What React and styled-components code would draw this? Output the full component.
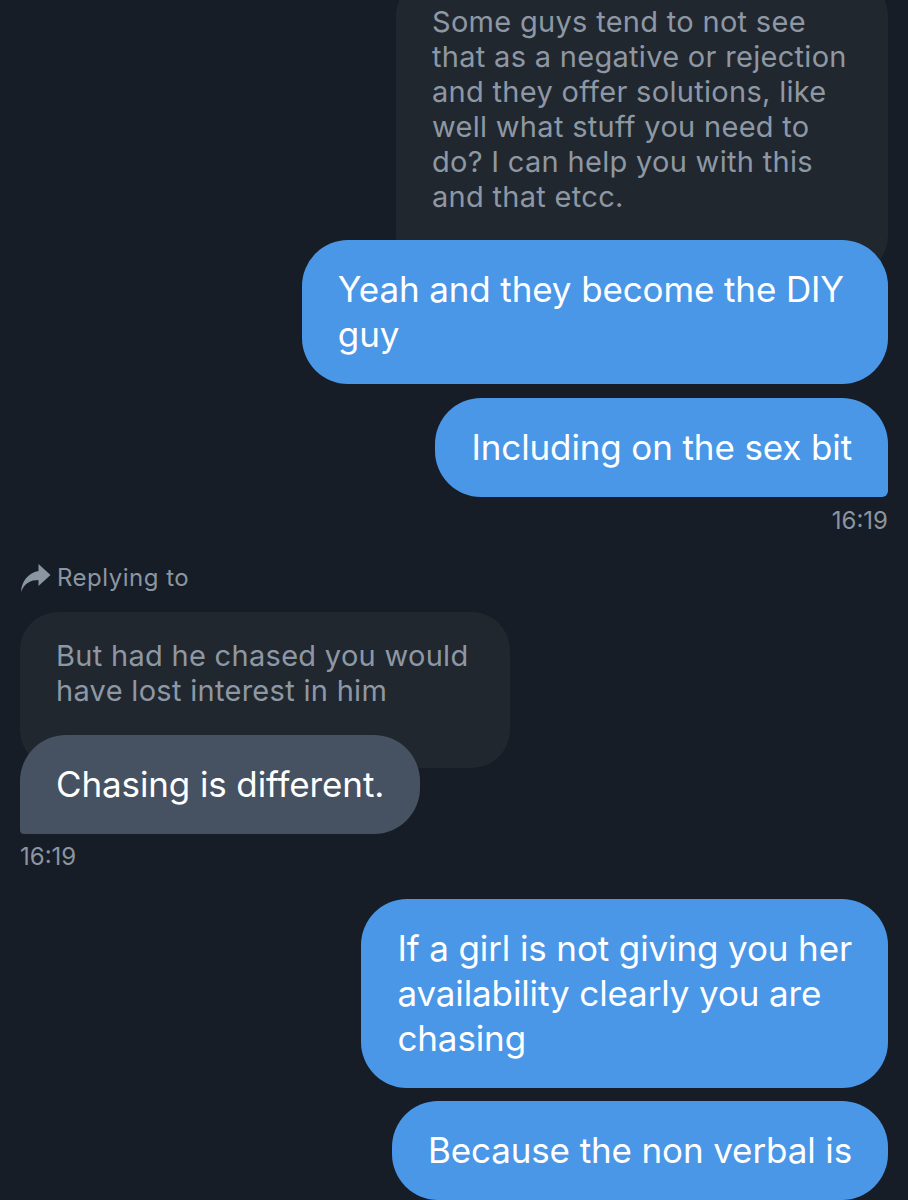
import React from 'react';
import styled, { createGlobalStyle } from 'styled-components';

const GlobalStyle = createGlobalStyle`
  html, body {
    margin: 0;
    padding: 0;
    background: #161d27;
  }
`;

const Screen = styled.div`
  width: 908px;
  height: 1200px;
  overflow: hidden;
  background: #161d27;
  font-family: Inter, "Noto Sans", sans-serif;
  -webkit-font-smoothing: antialiased;
`;

const Thread = styled.div`
  display: flex;
  flex-direction: column;
  padding: 0 20px;
  margin-top: -22px;
`;

const Row = styled.div`
  display: flex;
  flex-direction: column;
  align-items: ${p => (p.$side === 'out' ? 'flex-end' : 'flex-start')};
  margin-top: ${p => p.$gap || 0}px;
`;

const Quote = styled.div`
  width: ${p => p.$width || 492}px;
  box-sizing: border-box;
  background: #21272f;
  border-radius: 38px;
  padding: 26px 30px 60px 36px;
  color: #8e98a4;
  font-size: 29px;
  line-height: 35px;
  letter-spacing: 0.3px;
`;

const radii = {
  out: '46px 46px 46px 46px',
  outLast: '46px 46px 6px 46px',
  in: '46px 46px 46px 4px',
};

const Bubble = styled.div`
  position: relative;
  z-index: 1;
  width: max-content;
  box-sizing: border-box;
  padding: 27px ${p => p.$padRight || 36}px 27px 36px;
  border-radius: ${p => radii[p.$shape || 'out']};
  background: ${p => (p.$tone === 'gray' ? '#465261' : '#4a97e7')};
  color: #ffffff;
  font-size: 35px;
  line-height: 45px;
  letter-spacing: -0.12px;
  margin-top: ${p => (p.$overlap ? `-${p.$overlap}px` : '0')};
`;

const Time = styled.div`
  color: #8b949f;
  font-size: 24px;
  line-height: 28px;
  margin-top: ${p => p.$gap}px;
`;

const ReplyLabel = styled.div`
  display: flex;
  align-items: center;
  gap: 6px;
  margin-top: 28px;
  color: #8b96a3;
  font-size: 24px;
  line-height: 30px;
  letter-spacing: 0.5px;
`;

const ReplyIcon = () => (
  <svg width="31" height="28" viewBox="0 0 30 28">
    <path
      d="M18 0 L30 11 L18 22 L18 16 C10 16 4 19 0.5 28 C1 18 7 9 18 7 Z"
      fill="#8b96a3"
    />
  </svg>
);

const Lines = ({ lines }) =>
  lines.map((l, i) => (
    <React.Fragment key={i}>
      {i > 0 && <br />}
      {l}
    </React.Fragment>
  ));

export default function App() {
  return (
    <Screen>
      <GlobalStyle />
      <Thread>
        <Row $side="out">
          <Quote>
            <Lines
              lines={[
                'Some guys tend to not see',
                'that as a negative or rejection',
                'and they offer solutions, like',
                'well what stuff you need to',
                'do? I can help you with this',
                'and that etcc.',
              ]}
            />
          </Quote>
          <Bubble $overlap={34} $padRight={44}>
            <Lines lines={['Yeah and they become the DIY', 'guy']} />
          </Bubble>
        </Row>
        <Row $side="out" $gap={14}>
          <Bubble $shape="outLast">Including on the sex bit</Bubble>
          <Time $gap={10}>16:19</Time>
        </Row>

        <Row $side="in">
          <ReplyLabel>
            <ReplyIcon />
            Replying to
          </ReplyLabel>
        </Row>
        <Row $side="in" $gap={19}>
          <Quote $width={490}>
            <Lines lines={['But had he chased you would', 'have lost interest in him']} />
          </Quote>
          <Bubble $tone="gray" $shape="in" $overlap={33}>
            Chasing is different.
          </Bubble>
          <Time $gap={9}>16:19</Time>
        </Row>

        <Row $side="out" $gap={28}>
          <Bubble>
            <Lines
              lines={[
                'If a girl is not giving you her',
                'availability clearly you are',
                'chasing',
              ]}
            />
          </Bubble>
        </Row>
        <Row $side="out" $gap={13}>
          <Bubble>Because the non verbal is</Bubble>
        </Row>
      </Thread>
    </Screen>
  );
}
